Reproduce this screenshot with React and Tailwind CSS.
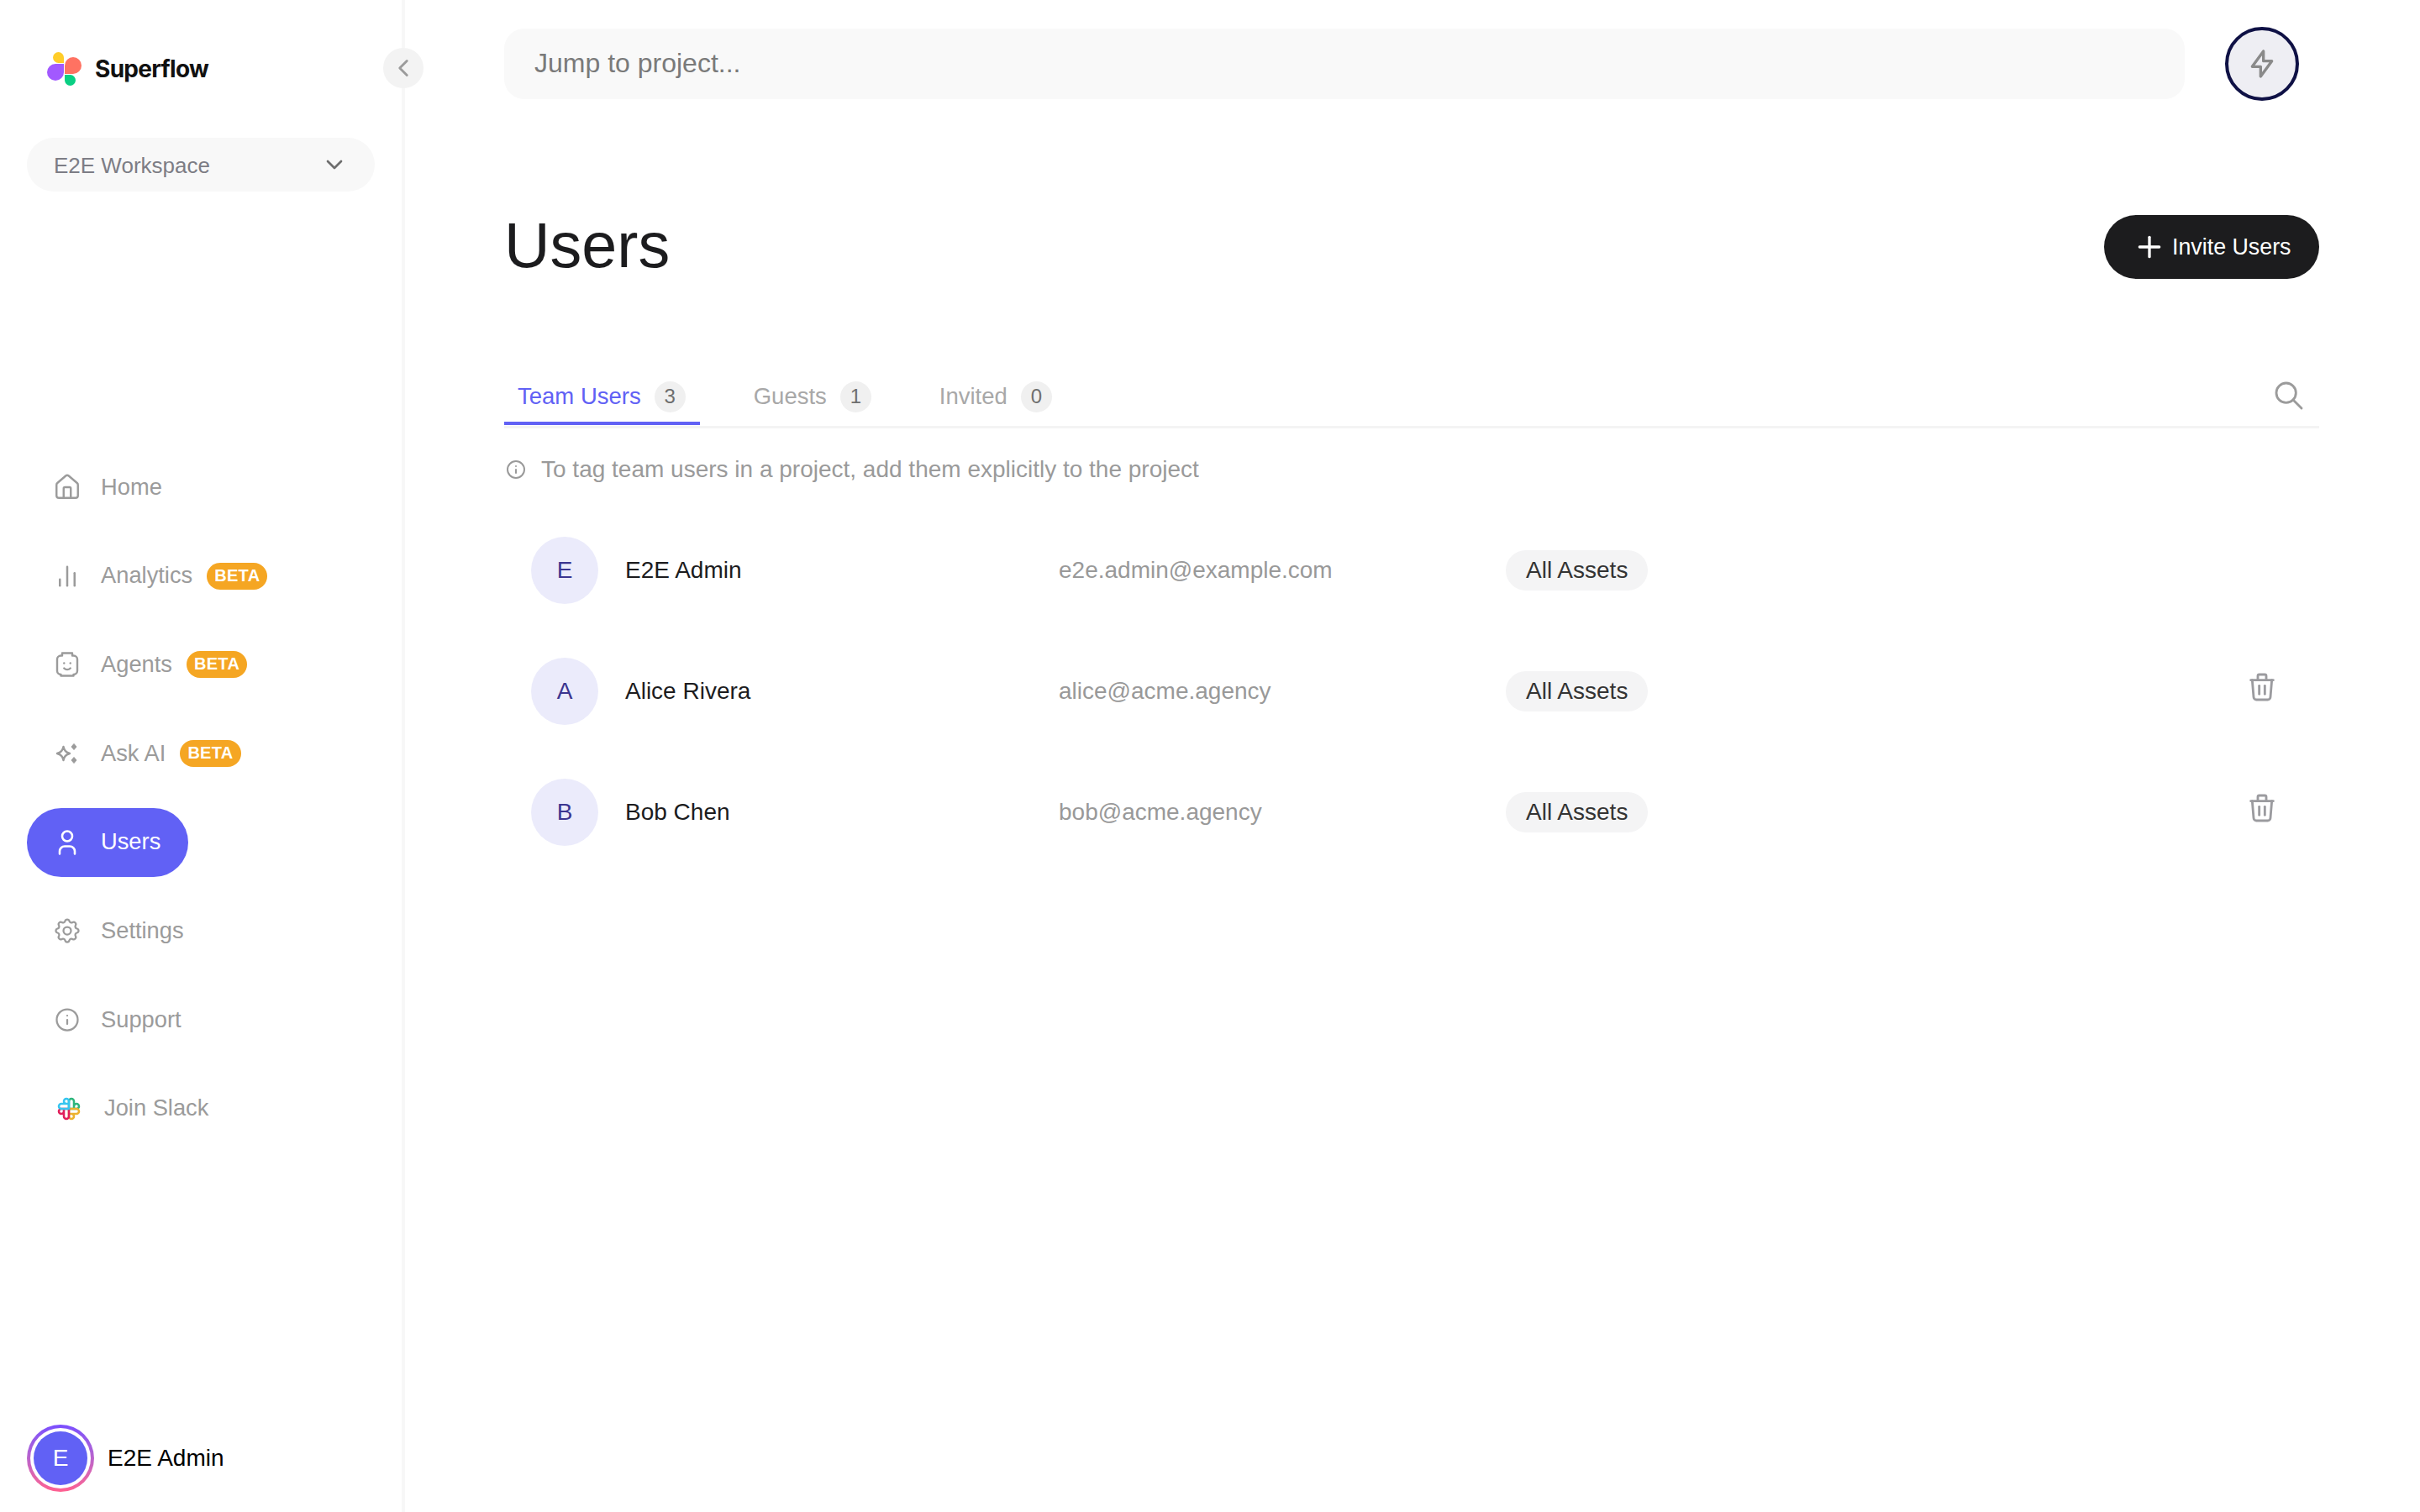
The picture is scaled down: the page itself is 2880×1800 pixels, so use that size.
import React from "react";
import { ChevronDown, ChevronLeft, ChartNoAxesColumn, House, Info, Plus } from "lucide-react";
import { TbBolt, TbLego, TbSearch, TbSettings, TbTrash, TbUser } from "react-icons/tb";

function Logo() {
  return (
    <svg viewBox="0 0 41 40" className="h-[40px] w-[41px] shrink-0">
      <path d="M13.5 0A6.500 6.500 0 0 1 20 6.500V13H13.500A6.500 6.500 0 0 1 13.500 0Z" fill="#ffcd29" />
      <path d="M20 14H10a10 10 0 1 0 10 10Z" fill="#a259ff" />
      <path d="M21 26V16a10 10 0 1 1 10 10Z" fill="#ff7262" />
      <path d="M21 27h6.500a6.500 6.500 0 1 1-6.500 6.500Z" fill="#0acf83" />
    </svg>
  );
}

function Sparkle() {
  return (
    <svg viewBox="0 0 28 28" className="h-[28px] w-[28px]" fill="none" stroke="currentColor" strokeWidth="2.4" strokeLinejoin="round">
      <path d="M9.500 6c.7 4.300 2.800 6.700 7.500 8-4.700 1.300-6.800 3.700-7.500 8-.7-4.300-2.800-6.700-7.500-8 4.700-1.300 6.800-3.700 7.500-8Z" />
      <path d="M22 2.500l3 3.500-3 3.500-3-3.500Z" fill="currentColor" strokeWidth="1" />
      <path d="M22 18.500l3 3.500-3 3.500-3-3.500Z" fill="currentColor" strokeWidth="1" />
    </svg>
  );
}

function Slack() {
  return (
    <svg viewBox="0 0 24 24" className="h-[36px] w-[36px]" fill="none" strokeWidth="1.7" strokeLinecap="round" strokeLinejoin="round">
      <path d="M12 12v-6a2 2 0 0 1 4 0v6m0 -2a2 2 0 1 1 2 2h-6" stroke="#2eb67d" />
      <path d="M12 12h6a2 2 0 0 1 0 4h-6m2 0a2 2 0 1 1 -2 2v-6" stroke="#ecb22e" />
      <path d="M12 12v6a2 2 0 0 1 -4 0v-6m0 2a2 2 0 1 1 -2 -2h6" stroke="#e01e5a" />
      <path d="M12 12h-6a2 2 0 0 1 0 -4h6m-2 0a2 2 0 1 1 2 -2v6" stroke="#36c5f0" />
    </svg>
  );
}

function Beta() {
  return (
    <span className="ml-[17px] flex h-[32px] items-center rounded-full bg-[#f5a623] px-[9px] pb-[2px] text-[20px] font-bold tracking-[0.3px] text-white">
      BETA
    </span>
  );
}

function NavItem({ icon, label, beta, active }) {
  return (
    <div
      className={
        "flex h-[82px] items-center self-start rounded-full pl-[34px] pr-[33px] text-[27.300px] " +
        (active ? "bg-[#6161f5] text-white" : "text-[#9b9b9b]")
      }
    >
      <span className="mr-[26px] flex w-[28px] items-center justify-center [&>svg]:shrink-0">{icon}</span>
      {label}
      {beta && <Beta />}
    </div>
  );
}

function Tab({ label, count, active }) {
  return (
    <div
      className={
        "flex h-[66px] items-center gap-[16px] rounded-t-[2px] border-b-[4px] pl-[16px] pr-[17px] pt-[2px] text-[27.500px] " +
        (active ? "border-[#6161f5] text-[#6161f5]" : "border-transparent text-[#a8a8a8]")
      }
    >
      {label}
      <span className="flex h-[37px] w-[37px] items-center justify-center rounded-full bg-[#f0f0f0] text-[24px] text-[#6e6e6e]">
        {count}
      </span>
    </div>
  );
}

function UserRow({ initial, name, email, removable }) {
  return (
    <div className="grid h-[144px] grid-cols-[112px_516px_532px_1fr_auto] items-center pl-[32px] text-[28px]">
      <div className="flex h-[80px] w-[80px] items-center justify-center rounded-full bg-[#ebebfb] text-[#3b3590]">
        {initial}
      </div>
      <div className="text-[#1c1c1e]">{name}</div>
      <div className="text-[#999999]">{email}</div>
      <div>
        <span className="inline-flex h-[48px] items-center rounded-full bg-[#f4f4f5] px-[24px] text-[#333333]">All Assets</span>
      </div>
      <div className="mb-[10px] mr-[48px] h-[40px] w-[40px]">
        {removable && <TbTrash size={40} strokeWidth={1.7} className="text-[#9b9b9f]" />}
      </div>
    </div>
  );
}

export default function App() {
  return (
    <div className="flex h-screen min-h-[1800px] w-full bg-white font-['Liberation_Sans',Arial,sans-serif]">
      <aside className="relative flex w-[482px] shrink-0 flex-col border-r-[4px] border-[#f7f7f7] pb-[24px] pl-[32px] pr-[32px]">
        <div className="flex h-[164px] items-center gap-[16px] pl-[24px]">
          <Logo />
          <span className="font-['Inter',sans-serif] text-[28px] font-bold tracking-[-0.7px] text-[#111111]">Superflow</span>
        </div>
        <div className="flex h-[64px] w-[414px] items-center justify-between rounded-full bg-[#f8f8f8] pl-[32px] pr-[32px] text-[26px] text-[#7d7d85]">
          <span className="mt-[2px]">E2E Workspace</span>
          <ChevronDown size={32} strokeWidth={2} className="text-[#6e6e6e]" />
        </div>
        <button className="absolute left-[456px] top-[57px] flex h-[48px] w-[48px] items-center justify-center rounded-full bg-[#f3f3f3] text-[#9b9b9b]">
          <ChevronLeft size={34} strokeWidth={2} />
        </button>

        <nav className="mt-[311px] flex flex-col gap-[23.7px]">
          <NavItem icon={<House size={34} strokeWidth={1.7} />} label="Home" />
          <NavItem icon={<ChartNoAxesColumn size={30} strokeWidth={2} />} label="Analytics" beta />
          <NavItem icon={<TbLego size={36} strokeWidth={1.6} />} label="Agents" beta />
          <NavItem icon={<Sparkle />} label="Ask AI" beta />
          <NavItem icon={<TbUser size={36} strokeWidth={1.7} />} label="Users" active />
          <NavItem icon={<TbSettings size={36} strokeWidth={1.5} />} label="Settings" />
          <NavItem icon={<Info size={30} strokeWidth={1.8} />} label="Support" />
          <div className="flex h-[82px] items-center pl-[32px] text-[27.300px] text-[#9b9b9b]">
            <span className="mr-[24px] flex w-[36px]">
              <Slack />
            </span>
            Join Slack
          </div>
        </nav>

        <div className="mt-auto flex items-center gap-[16px]">
          <div className="h-[80px] w-[80px] rounded-full bg-linear-to-b from-[#7a4dff] to-[#ff6090] p-[4px]">
            <div className="h-full w-full rounded-full bg-white p-[4px]">
              <div className="flex h-full w-full items-center justify-center rounded-full bg-[#6161f5] text-[28px] text-white">E</div>
            </div>
          </div>
          <span className="text-[28px] text-black">E2E Admin</span>
        </div>
      </aside>

      <main className="flex-1 pl-[118px] pr-[120px]">
        <div className="mt-[32px] flex h-[88px] items-center gap-[48px]">
          <input
            placeholder="Jump to project..."
            className="h-[84px] w-[2000px] rounded-[24px] bg-[#f9f9f9] px-[36px] pb-[1px] text-[32px] outline-none placeholder:text-[#7a7a7a]"
          />
          <div className="flex h-[88px] w-[88px] items-center justify-center rounded-full border-[4px] border-[#0f1145] bg-[#eeeef3] text-[#8a8a8a]">
            <TbBolt size={40} strokeWidth={2} />
          </div>
        </div>

        <div className="mt-[136px] flex h-[76px] items-center justify-between">
          <h1 className="mb-[3px] text-[75.500px] font-normal text-[#1c1c1e]">Users</h1>
          <button className="flex h-[76px] w-[256px] items-center gap-[7px] rounded-full bg-[#1c1c1e] pl-[34px] text-[26.800px] text-white">
            <Plus size={40} strokeWidth={2} />
            <span className="mt-[1px]">Invite Users</span>
          </button>
        </div>

        <div className="mt-[108px] flex h-[70px] items-start justify-between border-b-[3px] border-[#f4f4f4]">
          <div className="flex gap-[48px]">
            <Tab label="Team Users" count="3" active />
            <Tab label="Guests" count="1" />
            <Tab label="Invited" count="0" />
          </div>
          <TbSearch size={40} strokeWidth={1.7} className="mr-[16px] mt-[11px] text-[#9b9b9b]" />
        </div>

        <div className="mt-[31px] flex h-[36px] items-center gap-[18px] pl-[2px] text-[28px] text-[#9a9a9a]">
          <Info size={24} strokeWidth={2} />
          To tag team users in a project, add them explicitly to the project
        </div>

        <div className="mt-[30px] flex flex-col">
          <UserRow initial="E" name="E2E Admin" email="e2e.admin@example.com" />
          <UserRow initial="A" name="Alice Rivera" email="alice@acme.agency" removable />
          <UserRow initial="B" name="Bob Chen" email="bob@acme.agency" removable />
        </div>
      </main>
    </div>
  );
}
